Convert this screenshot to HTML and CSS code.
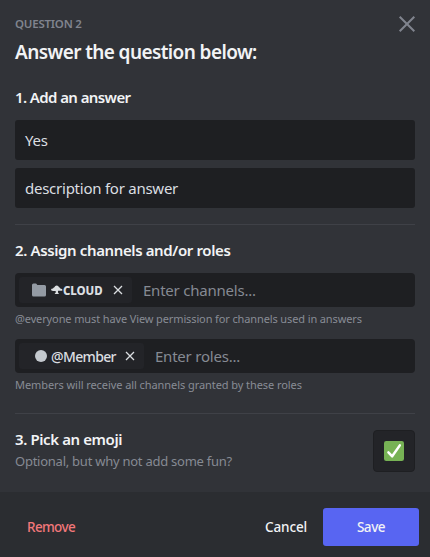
FILE: index.html
```
<!DOCTYPE html>
<html lang="en">
<head>
<meta charset="utf-8">
<title>Question 2</title>
<link rel="stylesheet" href="styles.css">
</head>
<body>
<div class="modal">
  <main class="content">
    <header class="header">
      <div>
        <div class="eyebrow">QUESTION 2</div>
        <h1 class="title">Answer the question below:</h1>
      </div>
      <svg class="close" viewBox="0 0 18 18"><path d="M1.7 1.7l14.6 14.6M16.3 1.7L1.7 16.3"/></svg>
    </header>

    <section class="answer">
      <h2 class="heading h-answer">1. Add an answer</h2>
      <div class="input yes"><span>Yes</span></div>
      <div class="input"><span>description for answer</span></div>
    </section>

    <section class="assign">
      <h2 class="heading h-assign">2. Assign channels and/or roles</h2>
      <div class="picker">
        <div class="chip">
          <svg class="folder" viewBox="0 0 14 14"><path d="M0 2Q0 .5 1.500.5H3.700Q4.500.5 4.800 1.200L5.300 2H12.500Q14 2 14 3.500V12Q14 13.500 12.500 13.500H1.500Q0 13.500 0 12Z"/></svg>
          <svg class="cloud" viewBox="0 0 12 10"><path d="M0 4.800Q.1 3.700 2 3.600Q2.300 2.600 3.400 2.300Q4 .6 5.700.6Q7.500.6 8 2.200Q9.200 2.400 9.300 3.600Q11.400 3.700 11.500 4.900Q11.300 5.900 9.500 5.800H7V7.500L8 9H3.600L4.700 7.500V5.900H2Q0 5.900 0 4.800Z"/></svg>
          <span class="channel">CLOUD</span>
          <svg class="remove-chip" viewBox="0 0 10 10"><path d="M1 1l8 8M9 1L1 9"/></svg>
        </div>
        <span class="placeholder">Enter channels...</span>
      </div>
      <p class="hint h-channels">@everyone must have View permission for channels used in answers</p>
      <div class="picker">
        <div class="chip chip-role">
          <i class="dot"></i>
          <span class="role">@Member</span>
          <svg class="remove-chip" viewBox="0 0 10 10"><path d="M1 1l8 8M9 1L1 9"/></svg>
        </div>
        <span class="placeholder p-roles">Enter roles...</span>
      </div>
      <p class="hint h-roles">Members will receive all channels granted by these roles</p>
    </section>

    <section class="emoji">
      <div>
        <h2 class="heading h-emoji">3. Pick an emoji</h2>
        <p class="optional">Optional, but why not add some fun?</p>
      </div>
      <div class="emoji-box">
        <svg viewBox="0 0 20 20"><rect width="20" height="20" rx="2.200"/><path d="M4.400 11.300L8.200 15.300L15.800 4.400"/></svg>
      </div>
    </section>
  </main>
  <footer class="footer">
    <span class="btn btn-remove">Remove</span>
    <span class="btn btn-cancel">Cancel</span>
    <span class="btn btn-save">Save</span>
  </footer>
</div>
</body>
</html>
```
FILE: styles.css
```
* { box-sizing: border-box; margin: 0; padding: 0; }

body {
  width: 430px;
  height: 557px;
  overflow: hidden;
  background: #313338;
  font-family: "Noto Sans", sans-serif;
  color: #dbdee1;
  white-space: nowrap;
}

.modal { display: flex; flex-direction: column; height: 557px; }
.content { height: 492px; padding: 14px 14px 0 15px; }

.header { display: flex; justify-content: space-between; height: 73px; }
.eyebrow {
  font-size: 11.500px;
  font-weight: 600;
  line-height: 20px;
  letter-spacing: -0.22px;
  color: #80848e;
}
.title {
  margin-top: 6px;
  font-size: 19px;
  font-weight: 600;
  line-height: 24px;
  letter-spacing: -0.6px;
  color: #f2f3f5;
}
.close { width: 18px; height: 18px; margin-top: 1px; fill: none; stroke: #80848e; stroke-width: 2; }

.heading { font-size: 15px; font-weight: 650; line-height: 20px; color: #f2f3f5; }
.h-answer { letter-spacing: -0.6px; }
.h-assign { letter-spacing: -0.38px; }
.h-emoji { letter-spacing: -0.4px; }

.answer { height: 138px; margin-right: 1px; border-bottom: 1px solid #3f4147; }
.input {
  display: flex;
  align-items: center;
  height: 40px;
  margin-top: 8px;
  padding-left: 10px;
  border-radius: 3px;
  background: #1e1f22;
  font-size: 15px;
  letter-spacing: -0.25px;
}
.input.yes { margin-top: 13px; }

.assign { height: 189px; margin-right: 1px; padding-top: 15px; border-bottom: 1px solid #3f4147; }
.picker {
  display: flex;
  align-items: center;
  height: 34px;
  padding-left: 4px;
  border-radius: 4px;
  background: #1e1f22;
}
.h-assign + .picker { margin-top: 13px; }
.chip {
  display: flex;
  align-items: center;
  width: 113px;
  height: 26px;
  padding-left: 13px;
  border-radius: 3px;
  background: #232428;
}
.chip-role { width: 125px; padding-left: 16px; }
.folder { width: 14px; height: 14px; fill: #949ba4; }
.cloud { width: 12px; height: 10px; margin-left: 5px; fill: #dbdee1; }
.channel { width: 50px; font-size: 11.500px; font-weight: 800; letter-spacing: -0.1px; }
.dot { width: 12px; height: 12px; border-radius: 50%; background: #c4c9ce; }
.role { width: 74px; margin-left: 4px; font-size: 14px; font-weight: 500; letter-spacing: -0.65px; }
.remove-chip { width: 10px; height: 10px; fill: none; stroke: #dbdee1; stroke-width: 1.300; }
.placeholder { margin-left: 11px; font-size: 15px; letter-spacing: -0.22px; color: #868a93; }
.p-roles { letter-spacing: -0.22px; }

.hint { font-size: 11px; line-height: 16px; color: #888c95; }
.h-channels { margin: 4px 0 12px; letter-spacing: -0.12px; }
.h-roles { margin-top: 4px; letter-spacing: -0.07px; }

.emoji { display: flex; justify-content: space-between; margin-right: 1px; padding-top: 16px; }
.h-emoji { margin-top: -1px; }
.optional { margin-top: 2px; font-size: 13px; line-height: 20px; letter-spacing: -0.25px; color: #868a93; }
.emoji-box {
  display: flex;
  align-items: center;
  justify-content: center;
  width: 42px;
  height: 42px;
  border: 1px solid #1e1f22;
  border-radius: 4px;
  background: #232428;
}
.emoji-box svg { width: 20px; height: 20px; }
.emoji-box rect { fill: #77b255; }
.emoji-box path { fill: none; stroke: #fff; stroke-width: 2.500; stroke-linecap: round; stroke-linejoin: round; }

.footer {
  display: flex;
  align-items: center;
  height: 65px;
  padding: 5px 11px 0 27px;
  background: #2b2d31;
}
.btn { font-size: 13.500px; font-weight: 500; line-height: 38px; }
.btn-remove { color: #f2777a; letter-spacing: -0.65px; }
.btn-cancel { margin-left: auto; margin-right: 16px; color: #f2f3f5; letter-spacing: -0.15px; }
.btn-save {
  width: 96px;
  height: 38px;
  border-radius: 3px;
  background: #5865f2;
  text-align: center;
  color: #f2f3f5;
  letter-spacing: -0.45px;
}
```
